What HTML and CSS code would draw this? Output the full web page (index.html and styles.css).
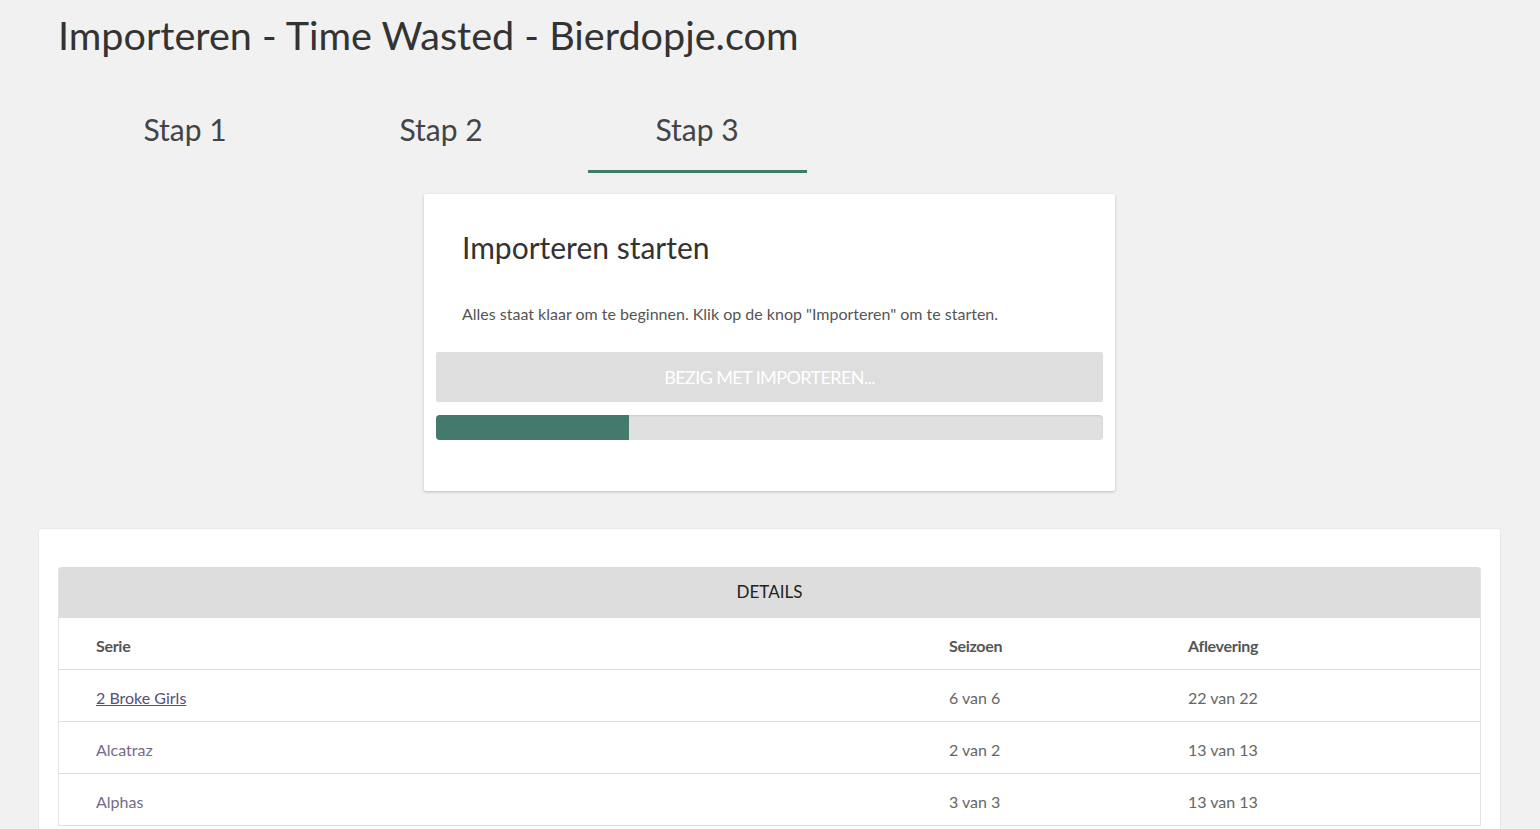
FILE: index.html
```html
<!DOCTYPE html>
<html lang="nl">
<head>
<meta charset="utf-8">
<title>Importeren - Time Wasted - Bierdopje.com</title>
<link rel="stylesheet" href="styles.css">
</head>
<body>
<h1 class="page-title">Importeren - Time Wasted - Bierdopje.com</h1>
<nav class="steps">
  <div class="step"><span>Stap 1</span></div>
  <div class="step"><span>Stap 2</span></div>
  <div class="step active"><span>Stap 3</span></div>
</nav>
<section class="card import-card">
  <h2 class="card-title">Importeren starten</h2>
  <p class="card-text">Alles staat klaar om te beginnen. Klik op de knop "Importeren" om te starten.</p>
  <button class="btn-busy" disabled>Bezig met importeren...</button>
  <div class="progress"><div class="progress-bar" style="width: 29%"></div></div>
</section>
<section class="card details-card">
  <div class="details">
    <div class="details-head">DETAILS</div>
    <div class="row row-head"><div>Serie</div><div>Seizoen</div><div>Aflevering</div></div>
    <div class="row"><div><a href="#" class="serie-link">2 Broke Girls</a></div><div>6 van 6</div><div>22 van 22</div></div>
    <div class="row"><div class="serie">Alcatraz</div><div>2 van 2</div><div>13 van 13</div></div>
    <div class="row"><div class="serie">Alphas</div><div>3 van 3</div><div>13 van 13</div></div>
  </div>
</section>
</body>
</html>
```
FILE: styles.css
```css
html, body {
  margin: 0;
  padding: 0;
  background: #f1f1f1;
  font-family: Lato, "Open Sans", sans-serif;
  color: #333;
}
.page-title {
  margin: 0;
  padding: 12px 0 0 58px;
  font-size: 39.6px;
  font-weight: 400;
  line-height: 46px;
  color: #333;
}
.steps {
  display: flex;
  margin: 42px 0 0 57px;
}
.step {
  width: 256px;
  display: flex;
  justify-content: center;
}
.step span {
  display: block;
  width: 219px;
  text-align: center;
  font-size: 30px;
  line-height: 36px;
  padding: 11px 0 23px;
  color: #444;
  border-bottom: 3px solid transparent;
}
.step.active span {
  border-bottom-color: #3f7b6b;
}
.card {
  background: #fff;
  box-sizing: border-box;
  border-radius: 2px;
}
.import-card {
  width: 691px;
  height: 297px;
  margin: 21px 0 0 424px;
  padding: 32px 12px 0;
  box-shadow: 0 1px 3px rgba(0,0,0,0.22);
}
.card-title {
  margin: 0;
  padding-left: 26px;
  font-size: 30px;
  font-weight: 400;
  line-height: 42px;
  color: #333;
}
.card-text {
  margin: 36px 0 0;
  padding-left: 26px;
  font-size: 16px;
  line-height: 20px;
  color: #555;
}
.btn-busy {
  display: block;
  width: 100%;
  height: 50px;
  margin-top: 28px;
  border: 0;
  border-radius: 2px;
  background: #dedede;
  color: #fff;
  font-family: Lato, sans-serif;
  font-size: 18px;
  text-transform: uppercase;
  letter-spacing: -0.6px;
}
.progress {
  margin-top: 13px;
  height: 25px;
  border-radius: 4px;
  background: #e0e0e0;
  box-shadow: inset 0 1px 2px rgba(0,0,0,0.1);
  overflow: hidden;
}
.progress-bar {
  height: 100%;
  background: #437a6c;
}
.details-card {
  margin: 38px 40px 0 39px;
  padding: 38px 19px 40px;
  box-shadow: 0 0 2px rgba(0,0,0,0.12);
}
.details {
  border-left: 1px solid #e4e4e4;
  border-right: 1px solid #e4e4e4;
  border-radius: 3px 3px 0 0;
}
.details-head {
  height: 51px;
  line-height: 49px;
  background: #dddddd;
  text-align: center;
  font-size: 17px;
  color: #222;
  border-radius: 3px 3px 0 0;
}
.row {
  display: grid;
  grid-template-columns: 853px 239px 1fr;
  align-items: center;
  border-bottom: 1px solid #dedede;
  font-size: 16px;
  color: #666;
  padding-top: 3px;
  box-sizing: border-box;
  height: 52px;
}
.row > div {
  padding-left: 37px;
}
.row-head {
  font-size: 16px;
  font-weight: 700;
  color: #555;
  letter-spacing: -0.3px;
}
.serie-link {
  color: #54507a;
  text-decoration: underline;
}
.serie {
  color: #75698c;
}
```
